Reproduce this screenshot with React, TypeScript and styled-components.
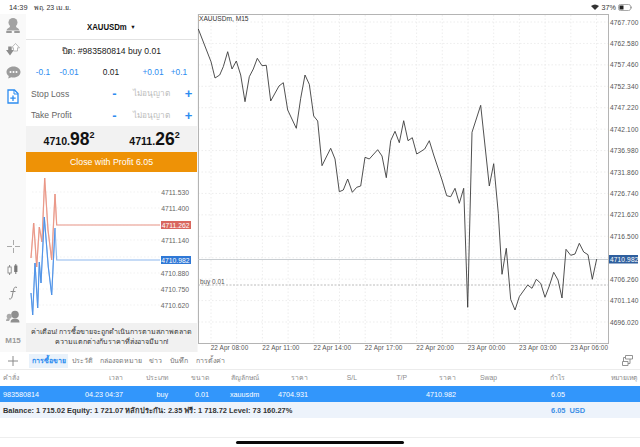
import React from "react";
import styled, { createGlobalStyle } from "styled-components";

const Global = createGlobalStyle`
  html, body { margin: 0; padding: 0; background: #fff; width: 640px; height: 447px; overflow: hidden; }
  body { font-family: "Liberation Sans", "Noto Sans", "DejaVu Sans", sans-serif; color: #222; }
  * { box-sizing: border-box; }
`;

const Page = styled.div`
  width: 640px; height: 447px; display: flex; flex-direction: column; background: #fff;
`;
const StatusBar = styled.div`
  height: 14px; display: flex; align-items: center; padding: 0 8px 0 9px; font-size: 7.4px; color: #333;
`;
const StatusDate = styled.span`margin-left: 6px; flex: 1; font-size: 7px;`;
const StatusRight = styled.div`display: flex; align-items: center; gap: 2px; font-size: 7.2px;`;
const WifiGlyph = styled.svg`margin-right: 1px;`;
const Workspace = styled.div`
  height: 338px; display: grid; grid-template-columns: 26px 172px 442px; background: #f7f7f7;
`;
const Sidebar = styled.div`
  display: flex; flex-direction: column; align-items: center; background: #f9f9f9; height: 338px;
`;
const SideIcon = styled.div<{ $top?: number }>`
  width: 26px; height: 23.5px; display: flex; align-items: center; justify-content: center;
  margin-top: ${(p) => p.$top ?? 0}px; color: #9a9a9a; font-size: 8px; font-weight: bold;
`;
const Panel = styled.div`
  height: 338px; margin-right: 1px; background: #fff; display: flex; flex-direction: column;
`;
const PanelTitle = styled.div`
  height: 26px; display: flex; align-items: center; justify-content: center; gap: 3px;
  border-bottom: 1px solid #e2e2e2; font-size: 9.4px; font-weight: bold; color: #111; flex: none;
`;
const TitleText = styled.span`display: inline-block; width: 39px; white-space: nowrap; transform: scaleX(.83); transform-origin: left center;`;
const Caret = styled.span`font-size: 5.5px; margin-left: 1px;`;
const CloseLine = styled.div`height: 21px; display: flex; align-items: center; justify-content: center; font-size: 8.6px; color: #222; flex: none;`;
const VolumeRow = styled.div`
  height: 22px; display: grid; grid-template-columns: 30px 22px 62px 22px 30px; padding-left: 2px; align-items: center; flex: none;
`;
const VolBtn = styled.span<{ $plain?: boolean }>`
  font-size: 8.4px; text-align: center; white-space: nowrap; color: ${(p) => (p.$plain ? "#222" : "#2d8cf0")};
`;
const LevelRow = styled.div`
  height: 21.5px; display: grid; grid-template-columns: 77px 13px 60px 15px; padding-left: 5px; align-items: center; flex: none;
`;
const LevelName = styled.span`font-size: 8.6px; color: #666;`;
const LevelBtn = styled.span`font-size: 13px; color: #2d8cf0; text-align: center; line-height: 1; font-weight: bold;`;
const LevelValue = styled.span`font-size: 8.2px; color: #bbb; text-align: center; white-space: nowrap;`;
const Quotes = styled.div`
  height: 26px; background: #f2f2f2; display: grid; grid-template-columns: 86px 85px; align-items: center; flex: none;
`;
const Quote = styled.div`
  text-align: center; font-weight: bold; font-size: 10.6px; color: #111; line-height: 26px; white-space: nowrap;
`;
const QuoteBig = styled.span`font-size: 17.5px;`;
const QuoteSup = styled.sup`font-size: 9px; line-height: 0; vertical-align: 7px;`;
const CloseButton = styled.div`
  height: 20px; background: #ee9206; color: #fff; font-size: 8.8px; display: flex; align-items: center; justify-content: center; flex: none;
`;
const MiniChart = styled.svg`width: 171px; height: 151px; display: block; flex: none;`;
const Warning = styled.div`
  height: 29px; background: #f1f1f1; font-size: 7.1px; line-height: 9.5px; color: #333; text-align: center; padding-top: 5px; flex: none; white-space: nowrap;
`;
const BigChart = styled.svg`width: 442px; height: 338px; display: block; background: #fff;`;
const TabBar = styled.div`
  height: 18px; display: flex; align-items: center; font-size: 7px; color: #777; border-bottom: 1px solid #ececec;
`;
const AddBox = styled.div`width: 29px; display: flex; justify-content: center; padding-right: 3px; color: #8a8a8a;`;
const Tab = styled.div<{ $active?: boolean; $w: number }>`
  height: 14px; width: ${(p) => p.$w}px; display: flex; align-items: center; justify-content: center;
  white-space: nowrap;
  background: ${(p) => (p.$active ? "#e9f2fb" : "transparent")};
  color: ${(p) => (p.$active ? "#2d8cf0" : "#777")};
  font-weight: ${(p) => (p.$active ? "bold" : "normal")};
`;
const TabSpacer = styled.div`flex: 1; display: flex; justify-content: flex-end; padding-right: 7px; color: #888;`;
const tableCols = "57px 63px 45px 41px 63px 36px 49px 50px 49px 41px 68px 72px";
const HeadRow = styled.div`
  height: 16px; display: grid; grid-template-columns: ${tableCols}; padding: 0 0 1px 3px; align-items: center;
  font-size: 6.8px; color: #8c8c8c;
`;
const SelRow = styled.div`
  height: 16px; display: grid; grid-template-columns: ${tableCols}; padding-left: 3px; align-items: center;
  font-size: 7.2px; color: #fff; background: #3296fb;
`;
const Cell = styled.span<{ $left?: boolean; $pad?: number }>`
  text-align: ${(p) => (p.$left ? "left" : "right")}; padding-left: ${(p) => p.$pad ?? 0}px; white-space: nowrap;
`;
const BalanceRow = styled.div`
  height: 16px; background: #edf3fb; display: flex; align-items: center; padding-left: 3px; font-size: 7.45px; font-weight: bold; color: #333;
`;
const BalanceText = styled.span`width: 548px; white-space: nowrap;`;
const BalanceProfit = styled.span`color: #3d8fe6; display: flex; gap: 4px; font-weight: bold;`;
const Footer = styled.div`
  margin-top: 19px; border-top: 1px solid #eee; flex: 1; display: flex; justify-content: center; padding-top: 3px;
`;
const HomeBar = styled.div`width: 168px; height: 3px; border-radius: 2px; background: #0a0a0a;`;

const main = "198.3,29 211,61.7 215,78 219.7,75 223.3,66.7 227.7,51.7 232,69 236.3,61 240.7,75 245,101.7 249.3,76.7 253.3,69 257.3,58.3 262,65.7 266.3,65.3 270.7,101 279,86 283.3,82.7 287.7,110 296.3,128.3 300.7,98.3 305,75 309.3,84.3 313.7,116 317.7,121 322,165.7 326.3,157 330.7,148.3 335,159 339.3,191.7 343.3,190 347.7,179 352.3,192.3 356.7,187.3 360.7,186 365,157.3 369.3,159 377.7,149.7 382,156 386.3,177.7 390.7,140.7 395,131.3 399.3,142.7 403.7,120.7 408,140.7 412.3,137.7 416.7,154 420,152 424.7,149 429.3,140.7 433.7,155 442,180 446.7,195.7 450.7,196.7 455,188.3 459.3,203.3 463.7,188.3 467.7,307.3 472,132.3 480.7,105.3 489.3,186 493.7,163.7 498.3,213.3 502,274.3 506.3,248.3 510.7,299.3 515,310 519.3,296.7 527.7,285 532,288.3 536.3,279.3 540.7,283.3 545,297.3 549.3,286 553.7,272.3 558,280 562,298 566,249.3 570.7,255.3 575,254 579.3,243.3 583.7,252 588,254.7 592.3,279.3 596.7,259";
const yLabels = ["4767.700","4762.580","4757.460","4752.340","4747.220","4742.100","4736.980","4731.860","4726.740","4721.620","4716.500",null,"4706.260","4701.140","4696.020"];
const xLabels = ["22 Apr 08:00","22 Apr 11:00","22 Apr 14:00","22 Apr 17:00","22 Apr 20:00","23 Apr 00:00","23 Apr 03:00","23 Apr 06:00"];
const hGrid = Array.from({ length: 15 }, (_, i) => 22 + i * 21.43);
const vGrid = Array.from({ length: 16 }, (_, i) => 211 + i * 25.7);

const miniLabels: [string, number][] = [["4711.530",192],["4711.400",208],["4711.140",240],["4710.880",273],["4710.750",289],["4710.620",305]];
const redPts = "31,258 33.7,223 36.7,267 39.3,227 42,242 44.7,178 48,230 51.7,260 55,194 56.7,225 160,225";
const bluePts = "31,293 32.7,315 35,263 37.7,308 39.3,262 41,283 44.3,217 48.3,267 51.7,295 55,228 56.7,260 160,260";

function ChartIcon() {
  return (
    <svg width="12" height="13" viewBox="0 0 12 13">
      <rect x="1" y="4" width="3.200" height="6" fill="#fff" stroke="#888" strokeWidth=".9" />
      <path d="M2.600 2v2M2.600 10v2" stroke="#888" />
      <rect x="7.200" y="2.500" width="3.200" height="6.500" fill="#777" />
      <path d="M8.800 1v10" stroke="#777" />
    </svg>
  );
}

export default function App() {
  return (
    <Page>
      <Global />
      <StatusBar>
        <span>14:39</span>
        <StatusDate>พฤ. 23 เม.ย.</StatusDate>
        <StatusRight>
          <WifiGlyph width="8" height="6" viewBox="0 0 8 6"><path d="M4 6 L0 2 Q4 -1 8 2 Z" fill="#333"/></WifiGlyph>
          <span>37%</span>
          <svg width="14" height="7" viewBox="0 0 14 7"><rect x=".5" y=".5" width="12" height="6" rx="1.8" fill="none" stroke="#aaa"/><rect x="1.5" y="1.5" width="4" height="4" fill="#222"/><rect x="13" y="2.5" width="1" height="2" fill="#aaa"/></svg>
        </StatusRight>
      </StatusBar>
      <Workspace>
        <Sidebar>
          <SideIcon>
            <svg width="16" height="17" viewBox="0 0 16 17"><circle cx="8" cy="5.5" r="4.5" fill="#a2a2a2"/><path d="M5 9 C5 11 2 11 1.5 13.5 L14.500 13.5 C14 11 11 11 11 9Z" fill="#a2a2a2"/><rect x="1" y="14" width="6" height="2" rx="1" fill="#999"/><rect x="9" y="14" width="6" height="2" rx="1" fill="#999"/></svg>
          </SideIcon>
          <SideIcon>
            <svg width="14" height="13" viewBox="0 0 14 13"><path d="M0 7h2.200V3.500h3.500V7h2.200L4 12.500Z" fill="#8c8c8c"/><path d="M9.500 .5 L13.500 4.800 H11.500 V8 H7.500 V4.800 H5.500Z" fill="#fff" stroke="#aaa" strokeWidth=".8"/></svg>
          </SideIcon>
          <SideIcon>
            <svg width="15" height="13" viewBox="0 0 15 13"><path d="M7.500 0.500C3.400 0.500 .5 3 .5 6c0 1.700.9 3.100 2.300 4.100L2.200 12.500 5.300 11.200c.7.200 1.400.300 2.200.300 4.100 0 7-2.500 7-5.500S11.600.5 7.500.5Z" fill="#9c9c9c"/><circle cx="4.500" cy="6" r="1" fill="#fff"/><circle cx="7.500" cy="6" r="1" fill="#fff"/><circle cx="10.500" cy="6" r="1" fill="#fff"/></svg>
          </SideIcon>
          <SideIcon>
            <svg width="12" height="15" viewBox="0 0 12 15"><path d="M1 1h6.500L11 4.500V14H1Z" fill="#fff" stroke="#2d8cf0" strokeWidth="1.300"/><path d="M7 1v4h4" fill="none" stroke="#2d8cf0"/><path d="M6 6.500v5.500M3.300 9.200h5.400" stroke="#2d8cf0" strokeWidth="1.300"/></svg>
          </SideIcon>
          <SideIcon $top={127}>
            <svg width="13" height="13" viewBox="0 0 13 13"><path d="M6.500 0v5M6.500 8v5M0 6.500h5M8 6.500h5" stroke="#aaa"/></svg>
          </SideIcon>
          <SideIcon><ChartIcon /></SideIcon>
          <SideIcon>
            <svg width="10" height="14" viewBox="0 0 10 14"><path d="M9 1.500C7 .5 6 1.500 5.500 4L4 11C3.500 13 2 13.500 1 12.500M2.500 5.500H7.500" fill="none" stroke="#8a8a8a" strokeWidth="1"/></svg>
          </SideIcon>
          <SideIcon>
            <svg width="14" height="13" viewBox="0 0 14 13"><circle cx="9" cy="4.500" r="3.800" fill="#8f8f8f"/><circle cx="3.200" cy="6.200" r="2.500" fill="#aaa"/><path d="M4.500 12.500c0-3 2-4 4.500-4s4.500 1 4.500 4Z" fill="#8f8f8f"/><path d="M0 11c0-2 1-3 3-3l1 1-1 2Z" fill="#aaa"/></svg>
          </SideIcon>
          <SideIcon>M15</SideIcon>
        </Sidebar>
        <Panel>
          <PanelTitle><TitleText>XAUUSDm</TitleText><Caret>▼</Caret></PanelTitle>
          <CloseLine>ปิด: #983580814 buy 0.01</CloseLine>
          <VolumeRow>
            <VolBtn>-0.1</VolBtn>
            <VolBtn>-0.01</VolBtn>
            <VolBtn $plain>0.01</VolBtn>
            <VolBtn>+0.01</VolBtn>
            <VolBtn>+0.1</VolBtn>
          </VolumeRow>
          <LevelRow>
            <LevelName>Stop Loss</LevelName><LevelBtn>-</LevelBtn><LevelValue>ไม่อนุญาต</LevelValue><LevelBtn>+</LevelBtn>
          </LevelRow>
          <LevelRow>
            <LevelName>Take Profit</LevelName><LevelBtn>-</LevelBtn><LevelValue>ไม่อนุญาต</LevelValue><LevelBtn>+</LevelBtn>
          </LevelRow>
          <Quotes>
            <Quote>4710.<QuoteBig>98</QuoteBig><QuoteSup>2</QuoteSup></Quote>
            <Quote>4711.<QuoteBig>26</QuoteBig><QuoteSup>2</QuoteSup></Quote>
          </Quotes>
          <CloseButton>Close with Profit 6.05</CloseButton>
          <MiniChart viewBox="26 172 171 151">
            {[192, 208, 225, 240, 257, 273, 289, 305].map((y) => (
              <line key={y} x1="32" x2="160" y1={y} y2={y} stroke="#ececec" strokeWidth=".7" strokeDasharray="1.5 2" />
            ))}
            <polyline points={redPts} fill="none" stroke="#f0b8ae" strokeWidth="1.300" />
            <polyline points={redPts.split(" ").slice(0, 10).join(" ")} fill="none" stroke="#e8917f" strokeWidth=".8" />
            <polyline points={bluePts} fill="none" stroke="#8db8ee" strokeWidth="1.200" />
            <polyline points={bluePts.split(" ").slice(0, 10).join(" ")} fill="none" stroke="#4a90e6" strokeWidth=".9" />
            {miniLabels.map(([t, y]) => (
              <text key={t} x="189" y={y + 2.500} textAnchor="end" fontSize="6.800" fill="#666" fontFamily="Liberation Sans">{t}</text>
            ))}
            <rect x="161" y="221" width="30" height="8" fill="#d9675e" />
            <text x="189.500" y="227.600" textAnchor="end" fontSize="6.800" fill="#fff" fontFamily="Liberation Sans">4711.262</text>
            <rect x="161" y="256" width="30" height="8" fill="#2f78d6" />
            <text x="189.500" y="262.600" textAnchor="end" fontSize="6.800" fill="#fff" fontFamily="Liberation Sans">4710.982</text>
          </MiniChart>
          <Warning>ค่าเตือน! การซื้อขายจะถูกดำเนินการตามสภาพตลาด<br />ความแตกต่างกับราคาที่ส่งอาจมีมาก!</Warning>
        </Panel>
        <BigChart viewBox="198 14 442 338">
          {hGrid.map((y) => (
            <line key={y} x1="198" x2="608" y1={y} y2={y} stroke="#e9e9e9" strokeWidth=".8" strokeDasharray="1.500 2" />
          ))}
          {vGrid.map((x) => (
            <line key={x} x1={x} x2={x} y1="15" y2="343" stroke="#e9e9e9" strokeWidth=".8" strokeDasharray="1.500 2" />
          ))}
          <rect x="198.500" y="14.500" width="410" height="329" fill="none" stroke="#b4b4b4" strokeWidth="1" />
          <line x1="198" x2="608" y1="259.500" y2="259.500" stroke="#c2c7cc" strokeWidth=".9" />
          <line x1="198" x2="608" y1="285" y2="285" stroke="#b4b4b4" strokeWidth=".9" strokeDasharray="2 1.500" />
          <polyline points={main} fill="none" stroke="#3c3c3c" strokeWidth=".9" />
          <text x="199" y="21" fontSize="6.600" fill="#333" fontFamily="Liberation Sans">XAUUSDm, M15</text>
          <text x="200" y="284" fontSize="6.400" fill="#555" fontFamily="Liberation Sans">buy 0.01</text>
          {yLabels.map((t, i) =>
            t ? <text key={t} x="610" y={hGrid[i] + 2.500} fontSize="6.600" fill="#555" letterSpacing=".12" fontFamily="Liberation Sans">{t}</text> : null
          )}
          <rect x="609" y="255" width="29" height="8.500" fill="#2f5f9e" />
          <text x="610" y="261.600" fontSize="6.600" fill="#fff" letterSpacing=".12" fontFamily="Liberation Sans">4710.982</text>
          {xLabels.map((t, i) => (
            <text key={t} x={229.500 + i * 51.400} y="349.500" textAnchor="middle" fontSize="6.400" fill="#555" letterSpacing=".12" fontFamily="Liberation Sans">{t}</text>
          ))}
        </BigChart>
      </Workspace>
      <TabBar>
        <AddBox>
          <svg width="12" height="12" viewBox="0 0 12 12"><path d="M6 1v10M1 6h10" stroke="#8a8a8a" strokeWidth="1" /></svg>
        </AddBox>
        <Tab $active $w={39}>การซื้อขาย</Tab>
        <Tab $w={28}>ประวัติ</Tab>
        <Tab $w={50}>กล่องจดหมาย</Tab>
        <Tab $w={19}>ข่าว</Tab>
        <Tab $w={28}>บันทึก</Tab>
        <Tab $w={35}>การตั้งค่า</Tab>
        <TabSpacer>
          <svg width="11" height="11" viewBox="0 0 11 11"><path d="M3.500.5h7v3.500h-7ZM.5 6.500h5.500v4h-5.500ZM8 4v4.500H6M1.500 6.500V2.500h2" fill="none" stroke="#888" strokeWidth=".9" /></svg>
        </TabSpacer>
      </TabBar>
      <HeadRow>
        <Cell $left>คำสั่ง</Cell><Cell>เวลา</Cell><Cell>ประเภท</Cell><Cell>ขนาด</Cell><Cell $left $pad={22}>สัญลักษณ์</Cell><Cell>ราคา</Cell><Cell>S/L</Cell><Cell>T/P</Cell><Cell>ราคา</Cell><Cell>Swap</Cell><Cell>กำไร</Cell><Cell>หมายเหตุ</Cell>
      </HeadRow>
      <SelRow>
        <Cell $left>983580814</Cell><Cell>04.23 04:37</Cell><Cell>buy</Cell><Cell>0.01</Cell><Cell $left $pad={21}>xauusdm</Cell><Cell>4704.931</Cell><Cell /><Cell /><Cell>4710.982</Cell><Cell /><Cell>6.05</Cell><Cell />
      </SelRow>
      <BalanceRow>
        <BalanceText>Balance: 1 715.02 Equity: 1 721.07 หลักประกัน: 2.35 ฟรี: 1 718.72 Level: 73 160.27%</BalanceText>
        <BalanceProfit><span>6.05</span><span>USD</span></BalanceProfit>
      </BalanceRow>
      <Footer><HomeBar /></Footer>
    </Page>
  );
}
